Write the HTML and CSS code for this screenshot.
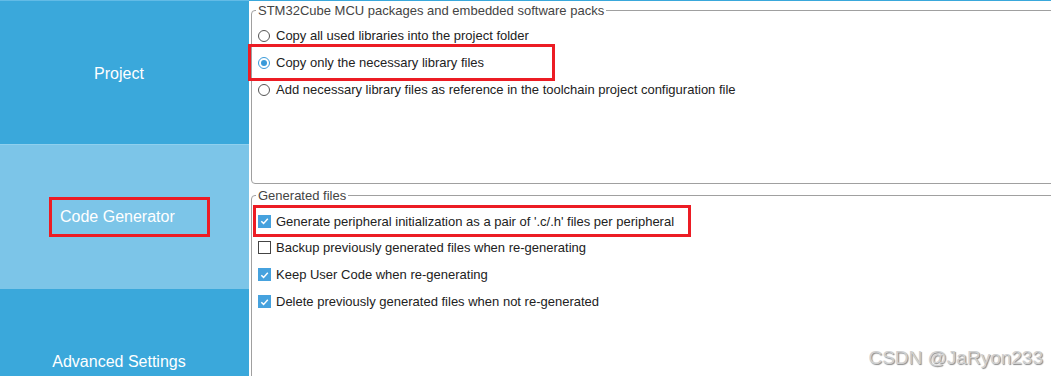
FILE: index.html
```html
<!DOCTYPE html>
<html>
<head lang="en">
    <meta charset="UTF-8">
    <title>Project Manager - Code Generator</title>
    <link rel="stylesheet" href="styles.css">
</head>
<body>
<div id="frame">
    <div class="sidebar">
        <div class="tab">Project</div>
        <div class="tab tab-active"><span class="tab-mark">Code Generator</span></div>
        <div class="tab tab-last">Advanced Settings</div>
    </div>
    <div class="main">
        <div class="group group-packs">
            <div class="group-title">STM32Cube MCU packages and embedded software packs</div>
            <div class="rows">
                <div class="row"><span class="radio"></span>Copy all used libraries into the project folder</div>
                <div class="row row-mark1"><span class="radio radio-on"></span>Copy only the necessary library files</div>
                <div class="row"><span class="radio"></span>Add necessary library files as reference in the toolchain project configuration file</div>
            </div>
        </div>
        <div class="group group-files">
            <div class="group-title">Generated files</div>
            <div class="rows rows-files">
                <div class="row row-mark2"><span class="check check-on"><svg width="12" height="12" viewBox="0 0 12 12"><path d="M2.5 6.2 L5 8.6 L9.6 3.6" fill="none" stroke="#fff" stroke-width="1.6"/></svg></span>Generate peripheral initialization as a pair of '.c/.h' files per peripheral</div>
                <div class="row"><span class="check"></span>Backup previously generated files when re-generating</div>
                <div class="row"><span class="check check-on"><svg width="12" height="12" viewBox="0 0 12 12"><path d="M2.5 6.2 L5 8.6 L9.6 3.6" fill="none" stroke="#fff" stroke-width="1.6"/></svg></span>Keep User Code when re-generating</div>
                <div class="row"><span class="check check-on"><svg width="12" height="12" viewBox="0 0 12 12"><path d="M2.5 6.2 L5 8.6 L9.6 3.6" fill="none" stroke="#fff" stroke-width="1.6"/></svg></span>Delete previously generated files when not re-generated</div>
            </div>
        </div>
    </div>
    <div class="watermark">CSDN @JaRyon233</div>
</div>
</body>
</html>
```

FILE: styles.css
```css
html, body {
    margin: 0;
    padding: 0;
    background: #fff;
}

#frame {
    position: relative;
    display: flex;
    width: 1051px;
    height: 376px;
    overflow: hidden;
    font-family: "Liberation Sans", Arial, sans-serif;
}

.sidebar {
    width: 249px;
    flex: none;
    background: #3aa8db;
    border-top: 1px solid #62bbe6;
}

.tab {
    height: 141px;
    display: flex;
    align-items: center;
    justify-content: center;
    color: #fff;
    font-size: 16px;
    border-bottom: 1px solid #8fd0ee;
    box-shadow: inset 0 -2px 0 #3aa8db;
    padding: 2px 11px 0 0;
    -webkit-font-smoothing: antialiased;
}

.tab-active {
    background: #7cc5e8;
    height: 144px;
    padding: 0;
    border: none;
    box-shadow: none;
    justify-content: flex-start;
    padding-left: 49px;
}

.tab-mark {
    border: 3px solid #ec1c24;
    padding: 9px 32px 9px 8px;
    line-height: 16px;
}

.tab-last {
    border: none;
    box-shadow: none;
    padding-top: 2px;
}

.main {
    flex: 1;
    min-width: 0;
    border-top: 1px solid #3aa8db;
    font-size: 13px;
    color: #222;
}

.group {
    margin-left: 2px;
    margin-right: -10px;
    border: 1px solid #a0a0a0;
    border-radius: 4px;
}

.group-packs {
    margin-top: 9px;
    height: 172px;
}

.group-files {
    margin-top: 11px;
    height: 200px;
}

.group-title {
    display: table;
    margin: -9px 0 0 4px;
    padding: 0 2px;
    background: #fff;
    line-height: 17px;
    color: #444;
}

.rows {
    padding: 3px 0 0 0;
}

.rows-files {
    padding-top: 4px;
}

.row {
    height: 27px;
    display: flex;
    align-items: center;
    padding-left: 6px;
}

.radio {
    width: 10px;
    height: 10px;
    border: 1px solid #555;
    border-radius: 50%;
    margin-right: 6px;
    position: relative;
    background: #fff;
}

.radio-on {
    border-color: #3a9ad9;
}

.radio-on::after {
    content: "";
    position: absolute;
    left: 2px;
    top: 2px;
    width: 6px;
    height: 6px;
    border-radius: 50%;
    background: #3a9ad9;
}

.check {
    width: 11px;
    height: 11px;
    border: 1px solid #444;
    margin-right: 5px;
    display: flex;
    align-items: center;
    justify-content: center;
}

.check-on {
    border-color: #46a2de;
    background: #46a2de;
}

.row-mark1 {
    width: 292px;
    margin-left: 1px;
    padding-left: 5px;
    outline: 3px solid #ec1c24;
    outline-offset: 2px;
}

.row-mark2 {
    width: 430px;
    margin-left: 4px;
    padding-left: 2px;
    height: 26px;
    outline: 3px solid #ec1c24;
}

.watermark {
    position: absolute;
    right: 8px;
    bottom: 7px;
    font-size: 19px;
    color: #d0d0d0;
    text-shadow: 1px 1px 1px #888;
}
```
